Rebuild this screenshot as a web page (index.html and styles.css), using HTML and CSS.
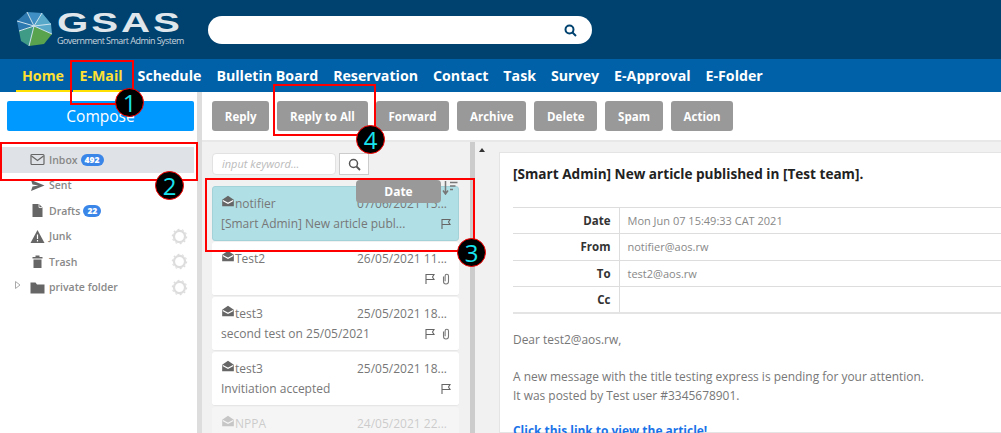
FILE: index.html
```html
<!DOCTYPE html>
<html>
	<head>
		<meta charset="utf-8">
		<title>GSAS E-Mail</title>
		<link rel="stylesheet" href="styles.css">
	</head>
	<body>
		<svg class="defs" width="0" height="0">
			<symbol id="i-open" viewBox="0 0 12 12"><path d="M1 5 6 1.500 11 5v5.500H1z" fill="#666"/><path d="M1.500 5.500 6 8l4.500-2.500" fill="none" stroke="#fff" stroke-width="1"/></symbol>
			<symbol id="i-flag" viewBox="0 0 12 12"><path d="M2 11V1.500h8L8.500 4 10 6.500H2" fill="none" stroke="#666" stroke-width="1.100"/></symbol>
			<symbol id="i-clip" viewBox="0 0 12 12"><path d="M3.500 3.500v5a2.500 2.500 0 0 0 5 0V3a1.700 1.700 0 0 0-3.400 0v5.200" fill="none" stroke="#777" stroke-width="1.100"/></symbol>
			<symbol id="i-gear" viewBox="0 0 20 20"><circle cx="10" cy="10" r="6.500" fill="none" stroke="#ddd" stroke-width="2.600"/><circle cx="10" cy="10" r="8.400" fill="none" stroke="#ddd" stroke-width="1.400" stroke-dasharray="2.200 3.080"/></symbol>
		</svg>

		<header class="top">
			<div class="logo">
				<svg class="logo-mark" width="38" height="37" viewBox="0 0 38 37">
					<polygon points="12,1 27,2 36,13 19,15" fill="#3f8fc4"/>
					<polygon points="12,1 19,15 4,20 2,10" fill="#2e79b0"/>
					<polygon points="27,2 36,13 37,23 19,15" fill="#58a9c9"/>
					<polygon points="4,20 19,15 14,35 6,30" fill="#3f9a86"/>
					<polygon points="19,15 37,23 29,33 14,35" fill="#59a34f"/>
					<path d="M12 1 19 15 27 2M2 10l17 5 17-2M4 20l15-5 18 8M19 15l-5 20" stroke="#cfe3ee" stroke-width="1" fill="none"/>
				</svg>
				<div class="logo-text">
					<div class="logo-name">GSAS</div>
					<div class="logo-sub">Government Smart Admin System</div>
				</div>
			</div>
			<div class="topsearch">
				<svg width="13" height="13" viewBox="0 0 13 13"><circle cx="5.500" cy="5.500" r="4" fill="none" stroke="#00426f" stroke-width="2"/><path d="M8.500 8.500 12 12" stroke="#00426f" stroke-width="2"/></svg>
			</div>
		</header>

		<nav class="menu">
			<a class="on home">Home</a>
			<a class="on mail">E-Mail</a>
			<a>Schedule</a>
			<a>Bulletin Board</a>
			<a>Reservation</a>
			<a>Contact</a>
			<a>Task</a>
			<a>Survey</a>
			<a>E-Approval</a>
			<a>E-Folder</a>
		</nav>

		<div class="main">
			<aside class="side">
				<button class="compose">Compose</button>
				<ul class="folders">
					<li class="sel">
						<svg class="ficon" width="15" height="15" viewBox="0 0 15 15"><rect x="1" y="2.500" width="13" height="10" rx="1" fill="none" stroke="#666" stroke-width="1.200"/><path d="M1.500 4 7.500 8.500 13.500 4" fill="none" stroke="#666" stroke-width="1.200"/></svg>
						<span>Inbox</span><b class="badge">492</b>
					</li>
					<li>
						<svg class="ficon" width="15" height="15" viewBox="0 0 15 15"><path d="M1 2 14.500 7.500 1 13l1.500-4.500 6-1-6-1z" fill="#666"/></svg>
						<span>Sent</span>
					</li>
					<li>
						<svg class="ficon" width="15" height="15" viewBox="0 0 15 15"><path d="M2.500 1H9l3.500 3.500V14h-10z" fill="#666"/><path d="M9 1v3.500h3.500" fill="none" stroke="#fff" stroke-width=".8"/></svg>
						<span>Drafts</span><b class="badge">22</b>
					</li>
					<li>
						<svg class="ficon" width="15" height="15" viewBox="0 0 15 15"><path d="M7.500 1 14.500 14H.5z" fill="#666"/><path d="M7.500 5.500v4.500M7.500 11v1.500" stroke="#fff" stroke-width="1.200"/></svg>
						<span>Junk</span><svg class="gear" width="17" height="17"><use href="#i-gear"/></svg>
					</li>
					<li>
						<svg class="ficon" width="15" height="15" viewBox="0 0 15 15"><path d="M2.500 3h10v1.500h-10zM3.500 5.500h8V14h-8zM5.500 1.500h4V3h-4z" fill="#666"/></svg>
						<span>Trash</span><svg class="gear" width="17" height="17"><use href="#i-gear"/></svg>
					</li>
					<li>
						<svg class="arrow" width="6" height="8" viewBox="0 0 6 8"><path d="M.5.500 5 4 .5 7.500z" fill="none" stroke="#aaa"/></svg>
						<svg class="ficon" width="15" height="15" viewBox="0 0 15 15"><path d="M.5 2.500h5l1.500 2h7.500V13.500H.5z" fill="#666"/></svg>
						<span>private folder</span><svg class="gear" width="17" height="17"><use href="#i-gear"/></svg>
					</li>
				</ul>
			</aside>
			<div class="split"></div>

			<div class="work">
				<div class="tools">
					<button>Reply</button>
					<button>Reply to All</button>
					<button>Forward</button>
					<button>Archive</button>
					<button>Delete</button>
					<button>Spam</button>
					<button>Action</button>
				</div>

				<div class="panes">
					<section class="list">
						<div class="finder">
							<div class="keyword">input keyword...</div>
							<div class="findbtn"><svg width="13" height="13" viewBox="0 0 13 13"><circle cx="5.500" cy="5.500" r="4" fill="none" stroke="#555" stroke-width="1.500"/><path d="M8.500 8.500 12 12" stroke="#555" stroke-width="1.800"/></svg></div>
						</div>
						<div class="sortrow">
							<div class="datebtn">Date</div>
							<svg class="sorticon" width="16" height="14" viewBox="0 0 16 14"><path d="M3.500 0v12M1 9.500 3.500 13 6 9.500" fill="none" stroke="#777" stroke-width="1.500"/><path d="M8 1.500h7.500M8 5h5.500M8 8.500h3" stroke="#777" stroke-width="1.500"/></svg>
						</div>

						<article class="card cur">
							<div class="l1"><svg class="env" width="14" height="14"><use href="#i-open"/></svg><span class="who">notifier</span><span class="when">07/06/2021 15...</span></div>
							<div class="l2"><span class="subj">[Smart Admin] New article publ...</span><svg width="12" height="12"><use href="#i-flag"/></svg></div>
						</article>
						<article class="card">
							<div class="l1"><svg class="env" width="14" height="14"><use href="#i-open"/></svg><span class="who">Test2</span><span class="when">26/05/2021 11...</span></div>
							<div class="l2"><span class="subj"></span><svg width="12" height="12"><use href="#i-flag"/></svg><svg width="12" height="12"><use href="#i-clip"/></svg></div>
						</article>
						<article class="card">
							<div class="l1"><svg class="env" width="14" height="14"><use href="#i-open"/></svg><span class="who">test3</span><span class="when">25/05/2021 18...</span></div>
							<div class="l2"><span class="subj">second test on 25/05/2021</span><svg width="12" height="12"><use href="#i-flag"/></svg><svg width="12" height="12"><use href="#i-clip"/></svg></div>
						</article>
						<article class="card">
							<div class="l1"><svg class="env" width="14" height="14"><use href="#i-open"/></svg><span class="who">test3</span><span class="when">25/05/2021 18...</span></div>
							<div class="l2"><span class="subj">Invitiation accepted</span><svg width="12" height="12"><use href="#i-flag"/></svg></div>
						</article>
						<article class="card faded">
							<div class="l1"><svg class="env" width="14" height="14"><use href="#i-open"/></svg><span class="who">NPPA</span><span class="when">24/05/2021 22...</span></div>
						</article>
					</section>

					<div class="split2"></div>

					<section class="read">
						<div class="up"></div>
						<div class="paper">
							<h2>[Smart Admin] New article published in [Test team].</h2>
							<table class="info">
								<tr><th>Date</th><td>Mon Jun 07 15:49:33 CAT 2021</td></tr>
								<tr><th>From</th><td>notifier@aos.rw</td></tr>
								<tr><th>To</th><td>test2@aos.rw</td></tr>
								<tr><th>Cc</th><td></td></tr>
							</table>
							<p class="hello">Dear test2@aos.rw,</p>
							<p class="msg">A new message with the title testing express is pending for your attention.<br>It was posted by Test user #3345678901.</p>
							<p class="link">Click this link to view the article!</p>
						</div>
					</section>
				</div>
			</div>
		</div>

		<!-- callouts drawn on top of the screenshot -->
		<div class="box b1"></div>
		<div class="box b2"></div>
		<div class="box b3"></div>
		<div class="box b4"></div>
		<div class="num n1">1</div>
		<div class="num n2">2</div>
		<div class="num n3">3</div>
		<div class="num n4">4</div>
	</body>
</html>
```

FILE: styles.css
```css
*{
	padding: 0;
	margin: 0;
	border: 0;
	box-sizing: border-box;
}
html,body{
	width: 1001px;
	height: 433px;
	overflow: hidden;
}
body{
	position: relative;
	background-color: #fff;
	font-family: "Open Sans", "Noto Sans", sans-serif;
	font-size: 12px;
	color: #777;
}
.defs{
	position: absolute;
}
button{
	font-family: inherit;
}

/* header */
.top{
	height: 59px;
	background-color: #00426f;
	display: flex;
	align-items: center;
}
.logo{
	width: 208px;
	padding-left: 15px;
	display: flex;
	gap: 4px;
	align-items: center;
}
.logo-text{
	color: #dfe6ec;
	width: 130px;
}
.logo-name{
	font-family: "Liberation Sans", sans-serif;
	font-size: 27px;
	line-height: 23px;
	font-weight: bold;
	letter-spacing: 2px;
	transform: scaleX(1.49);
	transform-origin: left;
}
.logo-sub{
	font-size: 9px;
	line-height: 12px;
	letter-spacing: -.55px;
	white-space: nowrap;
	color: #c8d4de;
}
.topsearch{
	width: 384px;
	height: 28px;
	background-color: #fff;
	border-radius: 14px;
	margin-top: 1px;
	display: flex;
	justify-content: flex-end;
	align-items: center;
	padding-right: 15px;
}

/* menu */
.menu{
	height: 33px;
	background-color: #0061a8;
	display: flex;
	padding-left: 16px;
	font-size: 14.200px;
	font-weight: bold;
	line-height: 34px;
	color: #fff;
}
.menu a{
	padding: 0 7.500px;
	white-space: nowrap;
}
.menu .on{
	color: #ffe033;
	padding: 0 6px;
	border-bottom: 2px solid #ffe000;
}
.menu .home{
	margin-right: 3.500px;
}
.menu .mail{
	margin-right: 1.500px;
}

/* layout */
.main{
	display: flex;
	height: 341px;
	overflow: hidden;
}
.side{
	width: 197px;
	flex: none;
	padding-top: 9px;
}
.split{
	width: 5px;
	flex: none;
	background-color: #ddd;
}
.work{
	flex: 1;
	min-width: 0;
}

/* folders */
.compose{
	display: block;
	width: 187px;
	height: 30px;
	margin-left: 7px;
	background-color: #0099ff;
	color: #fff;
	font-size: 15.500px;
	border-radius: 2px;
}
.folders{
	list-style-type: none;
	margin-top: 16px;
}
.folders li{
	height: 25.500px;
	margin-left: 2px;
	width: 192px;
	padding-left: 28px;
	display: flex;
	align-items: center;
	gap: 4px;
	position: relative;
	font-weight: 600;
	font-size: 10.500px;
	color: #888;
}
.folders .sel{
	background-color: #dfe2e6;
}
.ficon{
	flex: none;
}
.badge{
	background-color: #3a85e8;
	color: #fff;
	font-size: 8.500px;
	line-height: 12px;
	padding: 0 4px;
	border-radius: 7px;
	margin-left: -1px;
}
.gear{
	margin-left: auto;
	margin-right: 6px;
}
.arrow{
	position: absolute;
	left: 13px;
	top: 6px;
}

/* toolbar */
.tools{
	height: 50px;
	padding: 9px 0 0 10px;
	display: flex;
	gap: 8px;
	border-bottom: 2px solid #e8e8e8;
}
.tools button{
	height: 30px;
	padding: 0 12.800px;
	background-color: #999;
	color: #fff;
	font-size: 11.500px;
	font-weight: bold;
	border-radius: 3px;
}

/* message list */
.panes{
	display: flex;
	height: 291px;
	background-color: #f1f1f1;
	overflow: hidden;
}
.list{
	width: 268px;
	flex: none;
	padding: 11px 0 0 10px;
	position: relative;
}
.finder{
	display: flex;
	gap: 3px;
	height: 22px;
}
.keyword{
	width: 124px;
	background-color: #fff;
	border: 1px solid #e2e2e2;
	border-radius: 4px;
	color: #bbb;
	font-style: italic;
	font-size: 11px;
	line-height: 20px;
	padding-left: 9px;
}
.findbtn{
	width: 30px;
	background-color: #fff;
	border: 1px solid #ccc;
	display: flex;
	align-items: center;
	justify-content: center;
}
.sortrow{
	position: absolute;
	left: 154px;
	top: 38px;
	display: flex;
	gap: 1px;
	z-index: 2;
}
.sorticon{
	margin-top: 1px;
}
.datebtn{
	width: 85px;
	height: 23px;
	background-color: #999;
	border-radius: 4px;
	color: #fff;
	font-weight: bold;
	text-align: center;
	line-height: 23px;
}
.card{
	width: 247px;
	height: 54px;
	margin-bottom: 1px;
	background-color: #fff;
	border-radius: 3px;
	border-bottom: 1px solid #e6e6e6;
	padding: 7px 7px 0 9px;
}
.finder + .sortrow + .card{
	margin-top: 11px;
}
.cur{
	height: 55px;
	background-color: #b0dfe5;
	border: 1px solid #a4d2d9;
	padding: 7px 6px 0 8px;
}
.faded{
	opacity: .3;
}
.l1,.l2{
	display: flex;
	font-size: 12px;
}
.l1{
	align-items: flex-end;
	height: 20px;
	line-height: 20px;
}
.l2{
	align-items: center;
	gap: 4px;
	height: 19px;
	line-height: 19px;
}
.env{
	margin: 0 0 6px 0;
}
.who{
	flex: 1;
}
.when{
	margin-right: 5px;
}
.subj{
	flex: 1;
	white-space: nowrap;
}

/* reading pane */
.split2{
	width: 5px;
	flex: none;
	background-color: #ccc;
}
.read{
	flex: 1;
	display: flex;
	min-width: 0;
	padding-top: 10px;
}
.up{
	width: 24px;
	flex: none;
	position: relative;
}
.up::before{
	content: "";
	position: absolute;
	left: 4px;
	top: -4px;
	border: 3.500px solid transparent;
	border-bottom: 4px solid #333;
	border-top: 0;
}
.paper{
	flex: 1;
	background-color: #fff;
	border: 1px solid #e4e4e4;
	border-right: 0;
	padding-left: 13px;
}
.paper h2{
	font-size: 13.600px;
	line-height: 20px;
	color: #222;
	margin-top: 11px;
	margin-bottom: 23px;
}
.info{
	width: 100%;
	border-collapse: collapse;
	border-top: 1px solid #ddd;
	border-bottom: 2px solid #e4e4e4;
}
.info tr{
	height: 26.300px;
	border-bottom: 1px solid #ddd;
}
.info th{
	width: 106px;
	text-align: right;
	padding-right: 8px;
	font-size: 11.500px;
	color: #333;
	border-right: 1px solid #ddd;
}
.info td{
	padding-left: 8px;
	font-size: 11px;
	color: #888;
}
.hello,.msg,.link{
	font-size: 11.950px;
	line-height: 19px;
	color: #777;
}
.hello{
	margin-top: 16px;
}
.msg{
	margin-top: 18px;
}
.link{
	margin-top: 16px;
	color: #1a73e8;
	font-weight: bold;
}

/* callouts */
.box{
	position: absolute;
	border: 2px solid #f00;
}
.b1{
	left: 70px;
	top: 60px;
	width: 64px;
	height: 45px;
}
.b2{
	left: 0;
	top: 142px;
	width: 198px;
	height: 39px;
}
.b3{
	left: 205px;
	top: 178px;
	width: 270px;
	height: 74px;
}
.b4{
	left: 273px;
	top: 84px;
	width: 103px;
	height: 52px;
}
.num{
	position: absolute;
	width: 29px;
	height: 29px;
	border-radius: 50%;
	background-color: #000;
	border: 1px solid #f00;
	color: #19e3ee;
	font-size: 24px;
	line-height: 27px;
	text-align: center;
}
.n1{
	left: 115px;
	top: 88px;
}
.n2{
	left: 155px;
	top: 171px;
}
.n3{
	left: 457px;
	top: 238px;
}
.n4{
	left: 356px;
	top: 125px;
}
```
